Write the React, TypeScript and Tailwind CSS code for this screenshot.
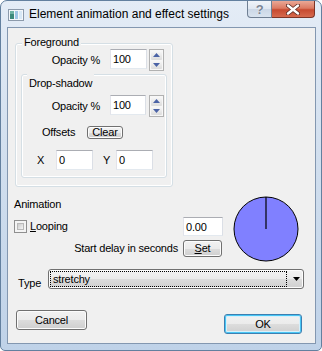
import React from "react";

// Vista style dialog: Element animation and effect settings

const btn =
  "flex items-center justify-center rounded-[3px] border border-[#707070] bg-[linear-gradient(#f2f2f2_0%,#ebebeb_50%,#dddddd_50%,#cfcfcf_100%)] shadow-[inset_0_0_0_1px_#fcfcfc]";

function TextBox({ value, className }: { value: string; className: string }) {
  return (
    <div
      className={`flex items-center border border-[#abadb3] border-b-[#e3e9ef] border-l-[#e2e3ea] border-r-[#dbdfe6] bg-white pl-[2px] leading-[14px] ${className}`}
    >
      {value}
    </div>
  );
}

function Spinner({ className }: { className: string }) {
  return (
    <div
      className={`flex h-[22px] w-[15px] flex-col gap-[1px] border border-[#b1b1b1] bg-[#f7f7f7] p-[1px] ${className}`}
    >
      <div className="flex flex-1 items-center justify-center rounded-[1px] bg-[linear-gradient(#f8f8f8,#dcdcdc)]">
        <svg width="7" height="4" viewBox="0 0 7 4">
          <path d="M3.5 0L7 4H0Z" fill="#4b63a6" />
        </svg>
      </div>
      <div className="flex flex-1 items-center justify-center rounded-[1px] bg-[linear-gradient(#f8f8f8,#dcdcdc)]">
        <svg width="7" height="4" viewBox="0 0 7 4">
          <path d="M0 0H7L3.5 4Z" fill="#4b63a6" />
        </svg>
      </div>
    </div>
  );
}

function TitleIcon() {
  return (
    <svg width="16" height="12" viewBox="0 0 16 12">
      <rect x="0.5" y="0.5" width="15" height="11" fill="#f4f7fb" stroke="#8c9aab" />
      <rect x="2" y="2" width="4" height="8" fill="#3d8a7c" />
      <rect x="2" y="2" width="4" height="3" fill="#6fb3a6" />
      <rect x="7" y="2" width="3" height="8" fill="#9fc6e6" />
      <rect x="11" y="2" width="3" height="8" fill="#d8e8f6" />
    </svg>
  );
}

export default function App() {
  return (
    <div className="h-[351px] w-[322px] overflow-hidden rounded-t-[7px] rounded-b-[5px] border border-[#63809f] bg-[linear-gradient(#e4ecf6_0%,#d3e0ef_40%,#bfd2e8_100%)] font-['Liberation_Sans',Arial,sans-serif] text-[11px] tracking-[-0.2px] text-black">
      {/* title bar */}
      <div className="flex h-[26px] items-start">
        <div className="ml-[7px] mt-[8px]">
          <TitleIcon />
        </div>
        <span className="ml-[5px] mt-[6px] text-[12px] leading-[15px] tracking-normal">
          Element animation and effect settings
        </span>
        <div className="ml-auto mr-[6px] flex">
          <div className="flex h-[17px] w-[25px] items-center justify-center rounded-bl-[4px] border border-t-0 border-[#6f7f93] bg-[linear-gradient(#f0f4f9_0%,#dfe7f1_50%,#cbd7e6_51%,#d9e3ef_100%)]">
            <span className="text-[13px] font-bold leading-[15px] text-[#7a8594] [text-shadow:0_0_1px_#ffffff]">
              ?
            </span>
          </div>
          <div className="flex h-[17px] w-[43px] items-center justify-center rounded-br-[4px] border border-l-0 border-t-0 border-[#7d3426] bg-[linear-gradient(#eaa896_0%,#dc7a62_45%,#c74a30_55%,#d66a4e_100%)]">
            <svg width="14" height="11" viewBox="0 0 14 11">
              <path d="M2 1.5L12 9.5M12 1.5L2 9.5" stroke="#5a2a22" strokeWidth="4" strokeLinecap="round" />
              <path d="M2 1.5L12 9.5M12 1.5L2 9.5" stroke="#ffffff" strokeWidth="2.4" strokeLinecap="round" />
            </svg>
          </div>
        </div>
      </div>

      {/* client area */}
      <div className="ml-[6px] h-[317px] w-[309px] border border-[#8397b0] bg-[#f0f0f0]">
        {/* Foreground group */}
        <div className="relative ml-[7px] mt-[15px] h-[144px] w-[158px] rounded-[3px] border border-[#d5dfe5] pt-[5px] shadow-[inset_0_0_0_1px_#ffffff]">
          <span className="absolute -top-[8px] left-[6px] bg-[#f0f0f0] px-[2px] leading-[12px]">
            Foreground
          </span>
          <div className="flex items-start">
            <span className="mt-[1px] w-[84px] text-right leading-[20px]">Opacity %</span>
            <TextBox value="100" className="ml-[10px] h-[20px] w-[37px]" />
            <Spinner className="ml-[2px]" />
          </div>

          {/* Drop-shadow group */}
          <div className="relative ml-[5px] mt-[3px] h-[104px] w-[146px] rounded-[3px] border border-[#d5dfe5] pt-[20px] shadow-[inset_0_0_0_1px_#ffffff]">
            <span className="absolute -top-[1px] left-[5px] bg-[#f0f0f0] px-[2px] pt-[3px] leading-[12px]">
              Drop-shadow
            </span>
            <div className="flex items-start">
              <span className="mt-[1px] w-[78px] text-right leading-[20px]">Opacity %</span>
              <TextBox value="100" className="ml-[10px] h-[20px] w-[36px]" />
              <Spinner className="ml-[3px]" />
            </div>
            <div className="mt-[9px] flex items-center">
              <span className="w-[65px] pl-[20px] leading-[13px]">Offsets</span>
              <div className={`${btn} h-[13px] w-[36px] leading-[11px]`}>Clear</div>
            </div>
            <div className="mt-[11px] flex items-center">
              <span className="w-[34px] pl-[15px] leading-[13px]">X</span>
              <TextBox value="0" className="h-[20px] w-[37px]" />
              <span className="ml-[10px] w-[13px] leading-[13px]">Y</span>
              <TextBox value="0" className="h-[20px] w-[37px]" />
            </div>
          </div>
        </div>

        {/* Animation section */}
        <div className="flex items-start">
          <div className="w-[215px]">
            <div className="ml-[6px] mt-[11px] leading-[13px]">Animation</div>
            <div className="mt-[6px] flex h-[19px] items-center">
              <div className="ml-[6px] h-[13px] w-[13px] border border-[#8f8f8f] bg-[#f4f4f4] p-[2px]">
                <div className="h-full w-full border border-[#b9b9b9] bg-[linear-gradient(135deg,#cbcbcb,#f6f6f6)]" />
              </div>
              <span className="ml-[3px] leading-[13px]">
                <span className="underline">L</span>ooping
              </span>
              <TextBox value="0.00" className="ml-auto h-[19px] w-[40px]" />
            </div>
            <div className="mt-[4px] flex h-[17px] items-center justify-end">
              <span className="leading-[13px]">Start delay in seconds</span>
              <div className={`${btn} ml-[5px] mr-[1px] h-[17px] w-[39px] leading-[13px]`}>
                <span>
                  <span className="underline">S</span>et
                </span>
              </div>
            </div>
          </div>
          <svg className="ml-[10px] mt-[9px]" width="66" height="66" viewBox="0 0 66 66">
            <circle cx="33" cy="33" r="32" fill="#8080ff" stroke="#000000" strokeWidth="1" />
            <line x1="33" y1="33" x2="33" y2="1" stroke="#000000" strokeWidth="1.2" />
          </svg>
        </div>

        {/* Type row */}
        <div className="mt-[7px] flex items-start">
          <span className="ml-[10px] mt-[8px] w-[30px] leading-[13px]">Type</span>
          <div className={`${btn} h-[20px] w-[256px] justify-start px-[1px]`}>
            <div className="flex h-[16px] w-[237px] items-center border border-dotted border-[#000000] pl-[2px] leading-[13px]">
              stretchy
            </div>
            <svg className="ml-[6px]" width="7" height="4" viewBox="0 0 7 4">
              <path d="M0 0H7L3.5 4Z" fill="#000000" />
            </svg>
          </div>
        </div>

        {/* buttons */}
        <div className="mt-[20px] flex items-start">
          <div className={`${btn} ml-[8px] h-[20px] w-[71px]`}>Cancel</div>
          <div className="ml-auto mr-[13px] mt-[4px] flex h-[20px] w-[78px] items-center justify-center rounded-[3px] border border-[#3c7fb1] bg-[linear-gradient(#f2f2f2_0%,#ebebeb_50%,#dddddd_50%,#cfcfcf_100%)] shadow-[inset_0_0_0_1px_#48c6f5,inset_0_0_0_2px_#d6f0fb]">
            OK
          </div>
        </div>
      </div>
    </div>
  );
}
